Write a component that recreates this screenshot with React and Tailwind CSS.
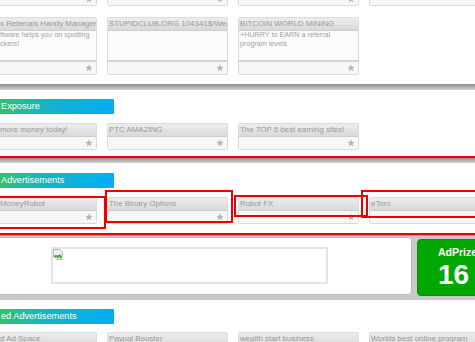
import React from 'react';

const Star = () => (
  <svg width="8" height="8" viewBox="0 0 24 24" className="block">
    <path d="M12 1.5l3.1 7 7.4.6-5.6 4.9 1.7 7.4L12 17.5l-6.6 3.9 1.7-7.4L1.5 9.1l7.4-.6z" fill="#b5b5b5" />
  </svg>
);

const BrokenImage = () => (
  <svg width="10" height="11" viewBox="0 0 11 12" className="block">
    <path d="M0.5 0.5h7l3 3v4.5l-1.5 1-1.5-1-1.5 1-1.5-1-1.5 1-1.5-1-1 .8z" fill="#eef2f6" stroke="#a3adb8" />
    <path d="M1 8l2-2 2 1.5 2-2 3 2.5v1l-1.5 1-1.5-1-1.5 1-1.5-1-1.5 1z" fill="#5aa842" />
    <path d="M3 11.5l2-1.2 2 1 2-1.2 1.5 1v.5H3z" fill="#4b9a35" />
  </svg>
);

const Card = ({ title = '', lines, tall, cut }) => (
  <div className="w-[121px] shrink-0 overflow-hidden rounded-[2px] border border-[#dadada] bg-[#fbfbfb]">
    <div
      className={`h-[13px] overflow-hidden whitespace-nowrap border-b border-[#cdcdcd] bg-linear-to-b from-[#ededed] to-[#d9d9d9] text-[7.9px] leading-[12px] text-[#9a9a9a] ${cut ? 'pl-[23px]' : 'pl-[1px]'}`}
    >
      {title}
    </div>
    {tall && (
      <div
        className={`h-[31px] overflow-hidden border-b-2 border-[#d3d3d3] text-[7.2px] leading-[8.5px] text-[#a2a2a2] ${cut ? 'pl-[23px]' : 'pl-[1px]'}`}
      >
        {lines?.map((l) => (
          <div key={l} className="whitespace-nowrap">{l}</div>
        ))}
      </div>
    )}
    <div className="flex h-[12px] items-center justify-end bg-[#f7f7f7] pr-[3px]">
      <Star />
    </div>
  </div>
);

const Band = ({ h = 'h-[6px]' }) => (
  <div className={`${h} bg-linear-to-b from-[#8f8f8f] via-[#b0b0b0] to-[#d2d2d2]`} />
);

const Label = ({ children }) => (
  <div className="h-[15px] w-[114px] overflow-hidden whitespace-nowrap rounded-r-[1px] bg-linear-to-r from-[#33c16b] via-[#12b3cc] via-45% to-[#05adf6] pl-[1px] text-[9.2px] leading-[15px] text-white">
    {children}
  </div>
);

const Row = ({ children, className = '' }) => (
  <div className={`-ml-[24px] flex gap-[10px] ${className}`}>{children}</div>
);

export default function App() {
  return (
    <div className="relative h-[342px] w-[475px] overflow-hidden bg-white font-['Liberation_Sans',Arial,sans-serif]">
      {/* referral tools */}
      <div className="bg-white pb-[9px]">
        <Row className="-mt-[52px]">
          <Card tall cut />
          <Card tall />
          <Card tall />
          <Card tall />
        </Row>
        <Row className="mt-[11px]">
          <Card
            tall
            cut
            title="x Referrals Handy Manager"
            lines={['ftware helps you on spotting', 'ckers!']}
          />
          <Card tall title="STUPIDCLUB.ORG 104341$/Week" />
          <Card tall title="BITCOIN WORLD MINING" lines={['+HURRY to EARN a referral', 'program levels']} />
        </Row>
      </div>
      <Band />

      {/* exposure */}
      <div className="bg-white pb-[8px] pt-[9px]">
        <Label>Exposure</Label>
        <Row className="mt-[9px]">
          <Card cut title="more money today!" />
          <Card title="PTC AMAZING" />
          <Card title="The TOP 5 best earning sites!" />
        </Row>
      </div>
      <Band h="h-[5px]" />

      {/* advertisements */}
      <div className="bg-white pb-[11px] pt-[10px]">
        <Label>Advertisements</Label>
        <Row className="mt-[9px]">
          <Card cut title="MoneyRobot" />
          <Card title="The Binary Options" />
          <Card title="Robot FX" />
          <Card title="eToro" />
        </Row>
      </div>

      {/* banner row */}
      <div className="-ml-[24px] flex h-[65px] items-start border-t border-[#9c9c9c] bg-[#c9c9c9]">
        <div className="mt-[1px] h-[58px] w-[436px] shrink-0 rounded-r-[4px] border border-[#bcbcbc] bg-white pl-[74px] pt-[9px]">
          <div className="h-[37px] w-[277px] border-2 border-[#e4e4e4]">
            <BrokenImage />
          </div>
        </div>
        <div className="ml-[5px] mt-[3px] h-[57px] w-[100px] shrink-0 rounded-[4px] border border-[#098d09] bg-[#00a700] pl-[20px] pt-[6px] font-bold text-white">
          <div className="whitespace-nowrap text-[10.5px] leading-[12px]">AdPrize</div>
          <div className="mt-[3px] text-[28px] leading-[28px]">16</div>
        </div>
      </div>

      {/* sponsored */}
      <div className="bg-white pt-[9px]">
        <Label>ed Advertisements</Label>
        <Row className="mt-[8px]">
          <Card cut title="d Ad Space" />
          <Card title="Paypal Booster" />
          <Card title="wealth start business" />
          <Card title="Worlds best online program" />
        </Row>
      </div>

      {/* red highlight outlines */}
      <div className="absolute left-0 right-0 top-[156px] h-[2px] bg-[#ee0000]" />
      <div className="absolute left-0 right-0 top-[233px] h-[2px] bg-[#ee0000]" />
      <div className="absolute left-[-4px] top-[196px] h-[33px] w-[110px] border-2 border-[#ee0000]" />
      <div className="absolute left-[105px] top-[190px] h-[33px] w-[128px] border-2 border-[#ee0000]" />
      <div className="absolute left-[234px] top-[195px] h-[22px] w-[134px] border-2 border-[#ee0000]" />
      <div className="absolute left-[361px] top-[190px] h-[28px] w-[130px] border-2 border-[#ee0000]" />
    </div>
  );
}
